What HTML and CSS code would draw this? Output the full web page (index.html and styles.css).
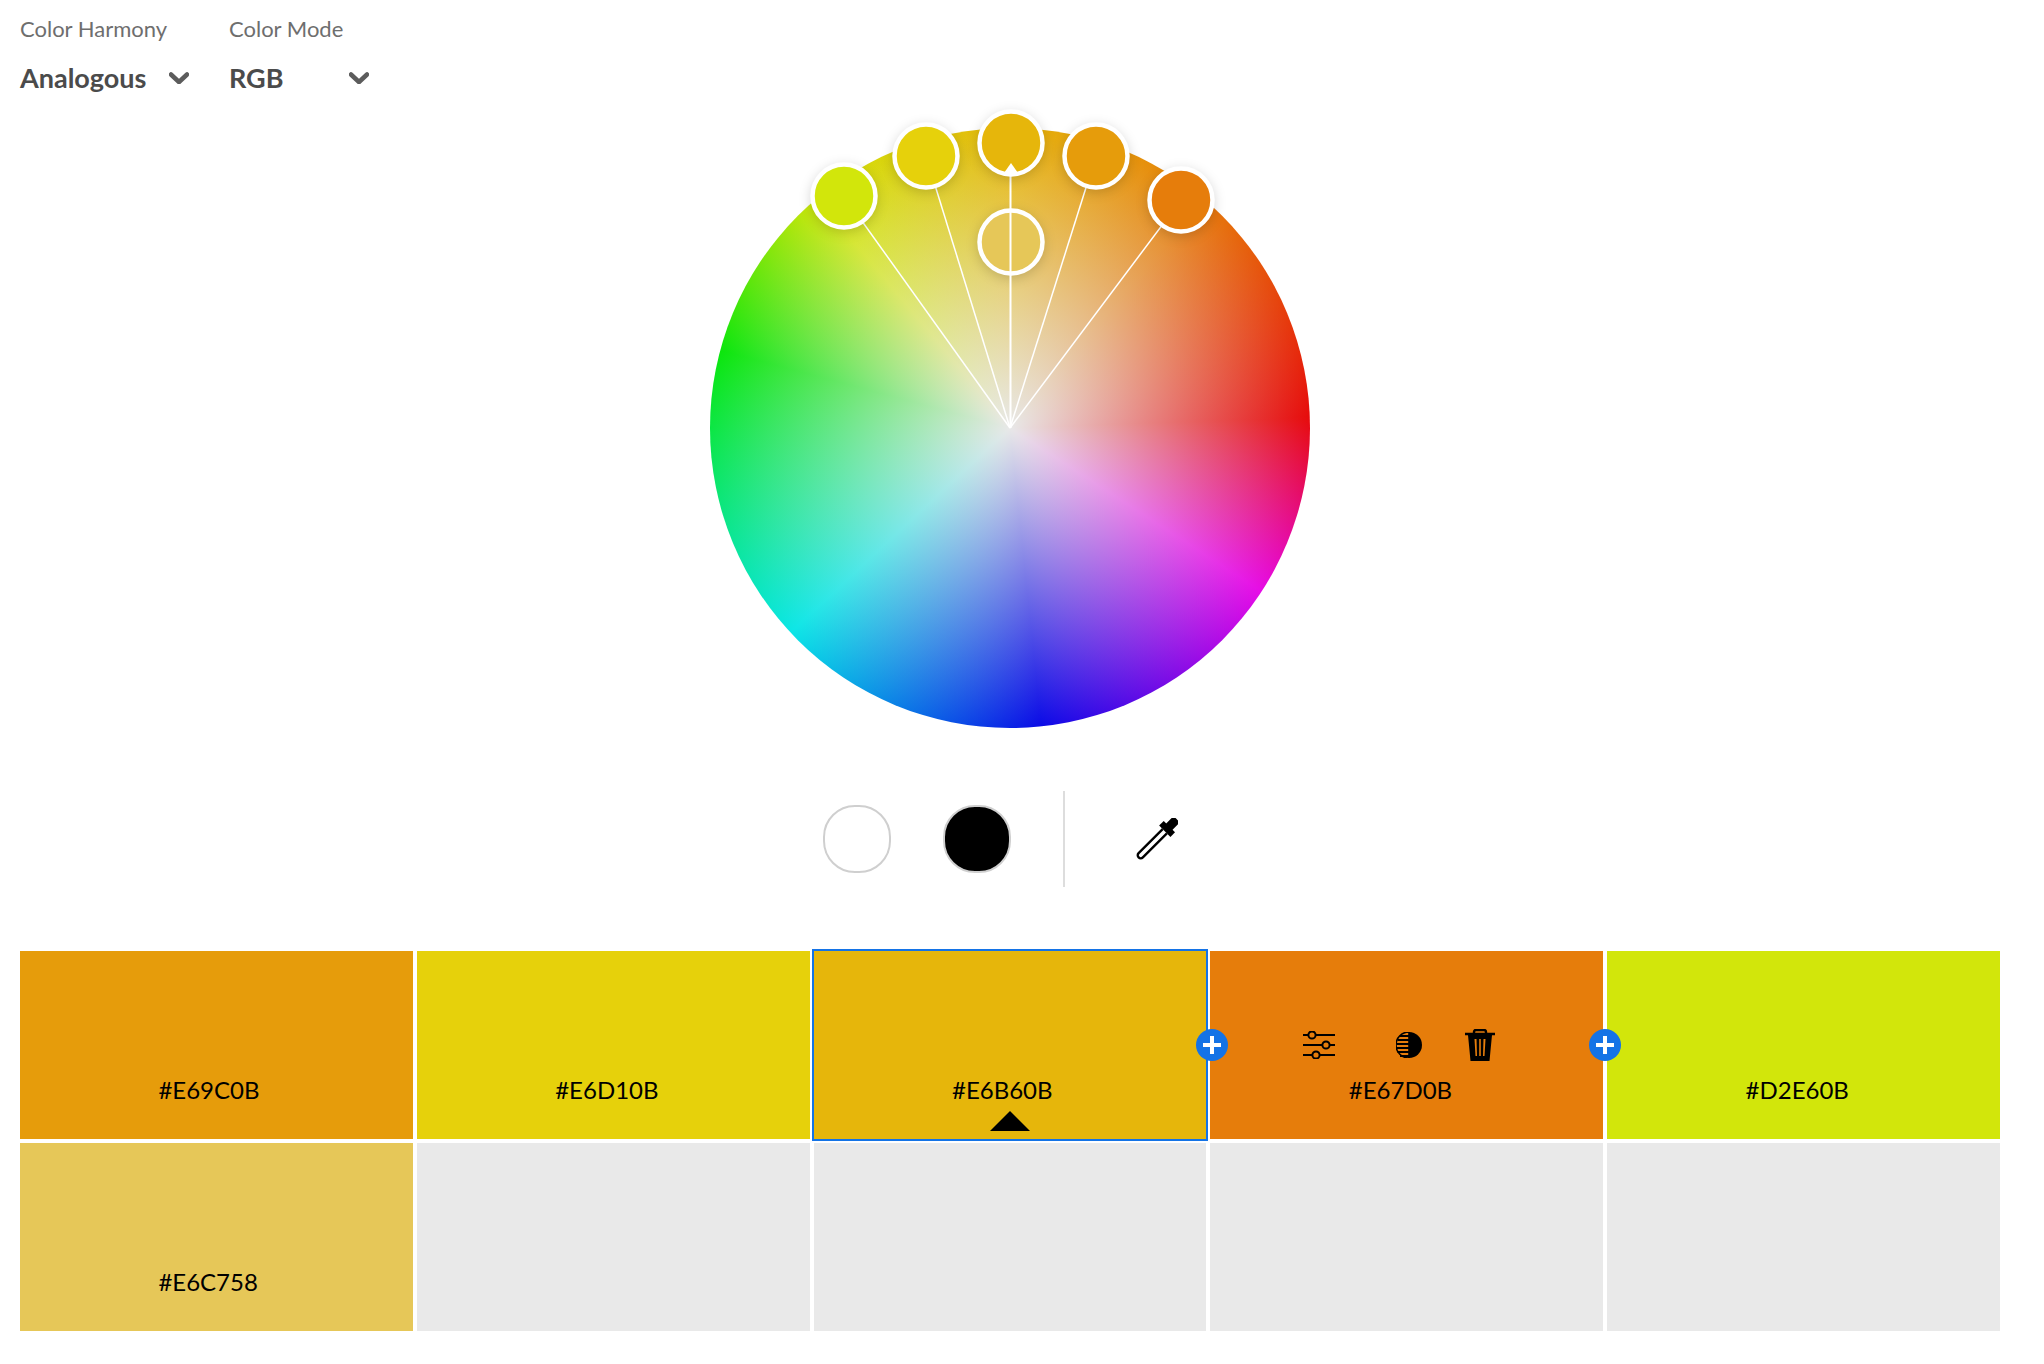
FILE: index.html
```html
<!DOCTYPE html>
<html lang="en">
<head>
    <meta charset="utf-8">
    <title>Color Wheel</title>
    <link rel="stylesheet" href="styles.css">
</head>
<body>
    <main class="main">
        <!-- harmony and mode pickers -->
        <div class="pickers">
            <div class="picker picker-harmony">
                <span class="picker-label">Color Harmony</span>
                <div class="picker-value">
                    <span>Analogous</span>
                    <svg class="chevron" viewBox="0 0 20 12"><path d="M2 2.5 L10 10 L18 2.5"/></svg>
                </div>
            </div>
            <div class="picker picker-mode">
                <span class="picker-label">Color Mode</span>
                <div class="picker-value">
                    <span>RGB</span>
                    <svg class="chevron" viewBox="0 0 20 12"><path d="M2 2.5 L10 10 L18 2.5"/></svg>
                </div>
            </div>
        </div>

        <!-- wheel -->
        <div class="stage">
            <div class="wheel"></div>
            <svg class="handles" viewBox="690 100 640 660">
                <circle class="handle" cx="1011" cy="242" r="31.5" fill="#E6C758"/>
                <g class="spokes">
                    <line x1="1010" y1="428" x2="844" y2="196"/>
                    <line x1="1010" y1="428" x2="926" y2="156"/>
                    <line class="spoke-base" x1="1010.5" y1="428" x2="1010.5" y2="143"/>
                    <line x1="1010" y1="428" x2="1096" y2="156"/>
                    <line x1="1010" y1="428" x2="1181" y2="200"/>
                </g>
                <circle class="handle" cx="844" cy="196" r="31.5" fill="#D2E60B"/>
                <circle class="handle" cx="926" cy="156" r="31.5" fill="#E6D10B"/>
                <circle class="handle" cx="1096" cy="156" r="31.5" fill="#E69C0B"/>
                <circle class="handle" cx="1181" cy="200" r="31.5" fill="#E67D0B"/>
                <circle class="handle" cx="1011" cy="143" r="31.5" fill="#E6B60B"/>
                <path class="notch" d="M1011 163 L1018 173 L1004 173 Z"/>
            </svg>
        </div>

        <!-- base colour tools -->
        <div class="tools">
            <div class="swatch swatch-white"></div>
            <div class="swatch swatch-black"></div>
            <div class="tools-divider"></div>
            <svg class="dropper" viewBox="0 0 42 42">
                <g transform="rotate(45 21 21)">
                    <rect x="16.5" y="-7" width="9" height="14" rx="3.5"/>
                    <rect x="13" y="3.5" width="16" height="6.5"/>
                    <path class="dropper-tube" d="M18 10 V44 a3 3 0 0 0 6 0 V10"/>
                </g>
            </svg>
        </div>

        <!-- colour cells -->
        <div class="cells">
            <div class="cell cell-a"><span class="hex">#E69C0B</span></div>
            <div class="cell cell-b"><span class="hex">#E6D10B</span></div>
            <div class="cell cell-c is-selected">
                <span class="hex">#E6B60B</span>
                <span class="base-mark"></span>
            </div>
            <div class="cell cell-d">
                <span class="add add-left"><svg viewBox="0 0 32 32"><path d="M16 7 V25 M7 16 H25"/></svg></span>
                <div class="actions">
                    <svg class="icon-sliders" viewBox="0 0 32 28">
                        <path d="M0 4 H32 M0 14 H32 M0 24 H32"/>
                        <circle cx="9" cy="4" r="3.6"/>
                        <circle cx="23" cy="14" r="3.6"/>
                        <circle cx="13" cy="24" r="3.6"/>
                    </svg>
                    <svg class="icon-contrast" viewBox="0 0 26 26">
                        <path d="M13 0 A13 13 0 0 1 13 26 Z"/>
                        <path d="M13 0 A13 13 0 0 0 13 26 Z" fill="none" stroke="#000" stroke-width="1.6"/>
                        <path class="contrast-lines" d="M4 4 H13 M1.5 8 H13 M0.5 12 H13 M0.5 16 H13 M1.5 20 H13 M4 24 H13"/>
                    </svg>
                    <svg class="icon-trash" viewBox="0 0 30 32">
                        <path class="trash-lid" d="M0 5 H30 M9 5 V3 Q9 1 11 1 H19 Q21 1 21 3 V5"/>
                        <path d="M3 6 H27 L24.5 32 H5.5 Z M9.5 10 L10.5 27 H12 L11.5 10 Z M14.2 10 V27 H15.8 V10 Z M18.5 10 L18 27 H19.5 L20.5 10 Z" fill-rule="evenodd"/>
                    </svg>
                </div>
                <span class="hex">#E67D0B</span>
                <span class="add add-right"><svg viewBox="0 0 32 32"><path d="M16 7 V25 M7 16 H25"/></svg></span>
            </div>
            <div class="cell cell-e"><span class="hex">#D2E60B</span></div>
            <div class="cell cell-f"><span class="hex">#E6C758</span></div>
            <div class="cell"></div>
            <div class="cell"></div>
            <div class="cell"></div>
            <div class="cell"></div>
        </div>
    </main>
</body>
</html>
```

FILE: styles.css
```css
body {
    margin: 0;
    background-color: #fff;
    font-family: "Lato", "Open Sans", sans-serif;
}

.main {
    width: 1980px;
    padding: 16px 0 32px 20px;
}

.pickers {
    display: flex;
    height: 84px;
}

.picker-harmony {
    width: 169px;
    margin-right: 40px;
}

.picker-mode {
    width: 140px;
}

.picker-label {
    display: block;
    height: 26px;
    line-height: 26px;
    font-size: 22px;
    color: #6e6e6e;
}

.picker-value {
    display: flex;
    justify-content: space-between;
    align-items: center;
    height: 34px;
    margin-top: 18px;
    font-size: 27px;
    font-weight: 700;
    color: #4b4b4b;
}

.chevron {
    width: 20px;
    height: 12px;
    margin-top: 2px;
    fill: none;
    stroke: #5c5c5c;
    stroke-width: 4.5;
    stroke-linecap: round;
    stroke-linejoin: round;
}

.stage {
    position: relative;
    width: 640px;
    height: 660px;
    margin: 0 auto;
}

.wheel {
    position: absolute;
    left: 20px;
    top: 28px;
    width: 600px;
    height: 600px;
    border-radius: 50%;
    background:
        radial-gradient(circle closest-side, #e8e8e8 0%, rgba(230, 230, 230, 0) 100%),
        conic-gradient(#E6B60B 0deg, #E67D0B 40deg, #E60B0B 88deg, #E60BE6 123deg, #0B0BE6 174deg, #0BE6E6 227deg, #0BE60B 285deg, #D2E60B 320deg, #E6B60B 360deg);
}

.handles {
    position: absolute;
    left: 0;
    top: 0;
    width: 640px;
    height: 660px;
}

.handle {
    stroke: #fff;
    stroke-width: 4.5;
    filter: drop-shadow(0 3px 6px rgba(0, 0, 0, 0.16));
}

.spokes line {
    stroke: #fff;
    stroke-width: 1.5;
}

.spokes .spoke-base {
    stroke-width: 2;
}

.notch {
    fill: #fff;
}

.tools {
    display: flex;
    justify-content: center;
    align-items: center;
    height: 96px;
    margin-top: 31px;
}

.swatch {
    box-sizing: border-box;
    width: 68px;
    height: 68px;
    border: 2px solid #cfcfcf;
    border-radius: 47%;
    margin-right: 52px;
}

.swatch-white {
    background-color: #fff;
}

.swatch-black {
    background-color: #000;
    margin-right: 52px;
}

.tools-divider {
    width: 2px;
    height: 96px;
    background-color: #ddd;
    margin-right: 71px;
}

.dropper {
    width: 42px;
    height: 42px;
    margin-right: 19px;
}

.dropper-tube {
    fill: none;
    stroke: #000;
    stroke-width: 2.4;
}

.cells {
    display: grid;
    grid-template-columns: repeat(5, 1fr);
    grid-auto-rows: 188px;
    gap: 4px;
    margin-top: 64px;
}

.cell {
    position: relative;
    display: flex;
    flex-direction: column;
    align-items: center;
    background-color: #e9e9e9;
}

.cell-a { background-color: #E69C0B; }
.cell-b { background-color: #E6D10B; }
.cell-c { background-color: #E6B60B; }
.cell-d { background-color: #E67D0B; }
.cell-e { background-color: #D2E60B; }
.cell-f { background-color: #E6C758; }

.is-selected {
    outline: 2px solid #1473e6;
}

.hex {
    width: 116px;
    height: 28px;
    margin-top: auto;
    margin-bottom: 35px;
    line-height: 28px;
    font-size: 24px;
    color: #000;
    white-space: nowrap;
}

.base-mark {
    position: absolute;
    left: 50%;
    bottom: 8px;
    margin-left: -20px;
    border-left: 20px solid transparent;
    border-right: 20px solid transparent;
    border-bottom: 20px solid #000;
}

.add {
    position: absolute;
    top: 78px;
    z-index: 2;
    width: 32px;
    height: 32px;
    border-radius: 50%;
    background-color: #1473e6;
}

.add-left {
    left: -14px;
}

.add-right {
    right: -18px;
}

.add svg {
    display: block;
    width: 32px;
    height: 32px;
    fill: none;
    stroke: #fff;
    stroke-width: 4;
}

.actions {
    display: flex;
    align-items: center;
    align-self: flex-start;
    height: 34px;
    margin-top: 77px;
    margin-left: 93px;
}

.icon-sliders {
    width: 32px;
    height: 28px;
    margin-right: 61px;
    stroke: #000;
    stroke-width: 2;
    fill: none;
}

.icon-sliders circle {
    fill: #E67D0B;
}

.icon-contrast {
    width: 26px;
    height: 26px;
    margin-right: 43px;
}

.contrast-lines {
    stroke: #000;
    stroke-width: 2;
}

.icon-trash {
    width: 30px;
    height: 32px;
}

.trash-lid {
    fill: none;
    stroke: #000;
    stroke-width: 2.4;
}
```
